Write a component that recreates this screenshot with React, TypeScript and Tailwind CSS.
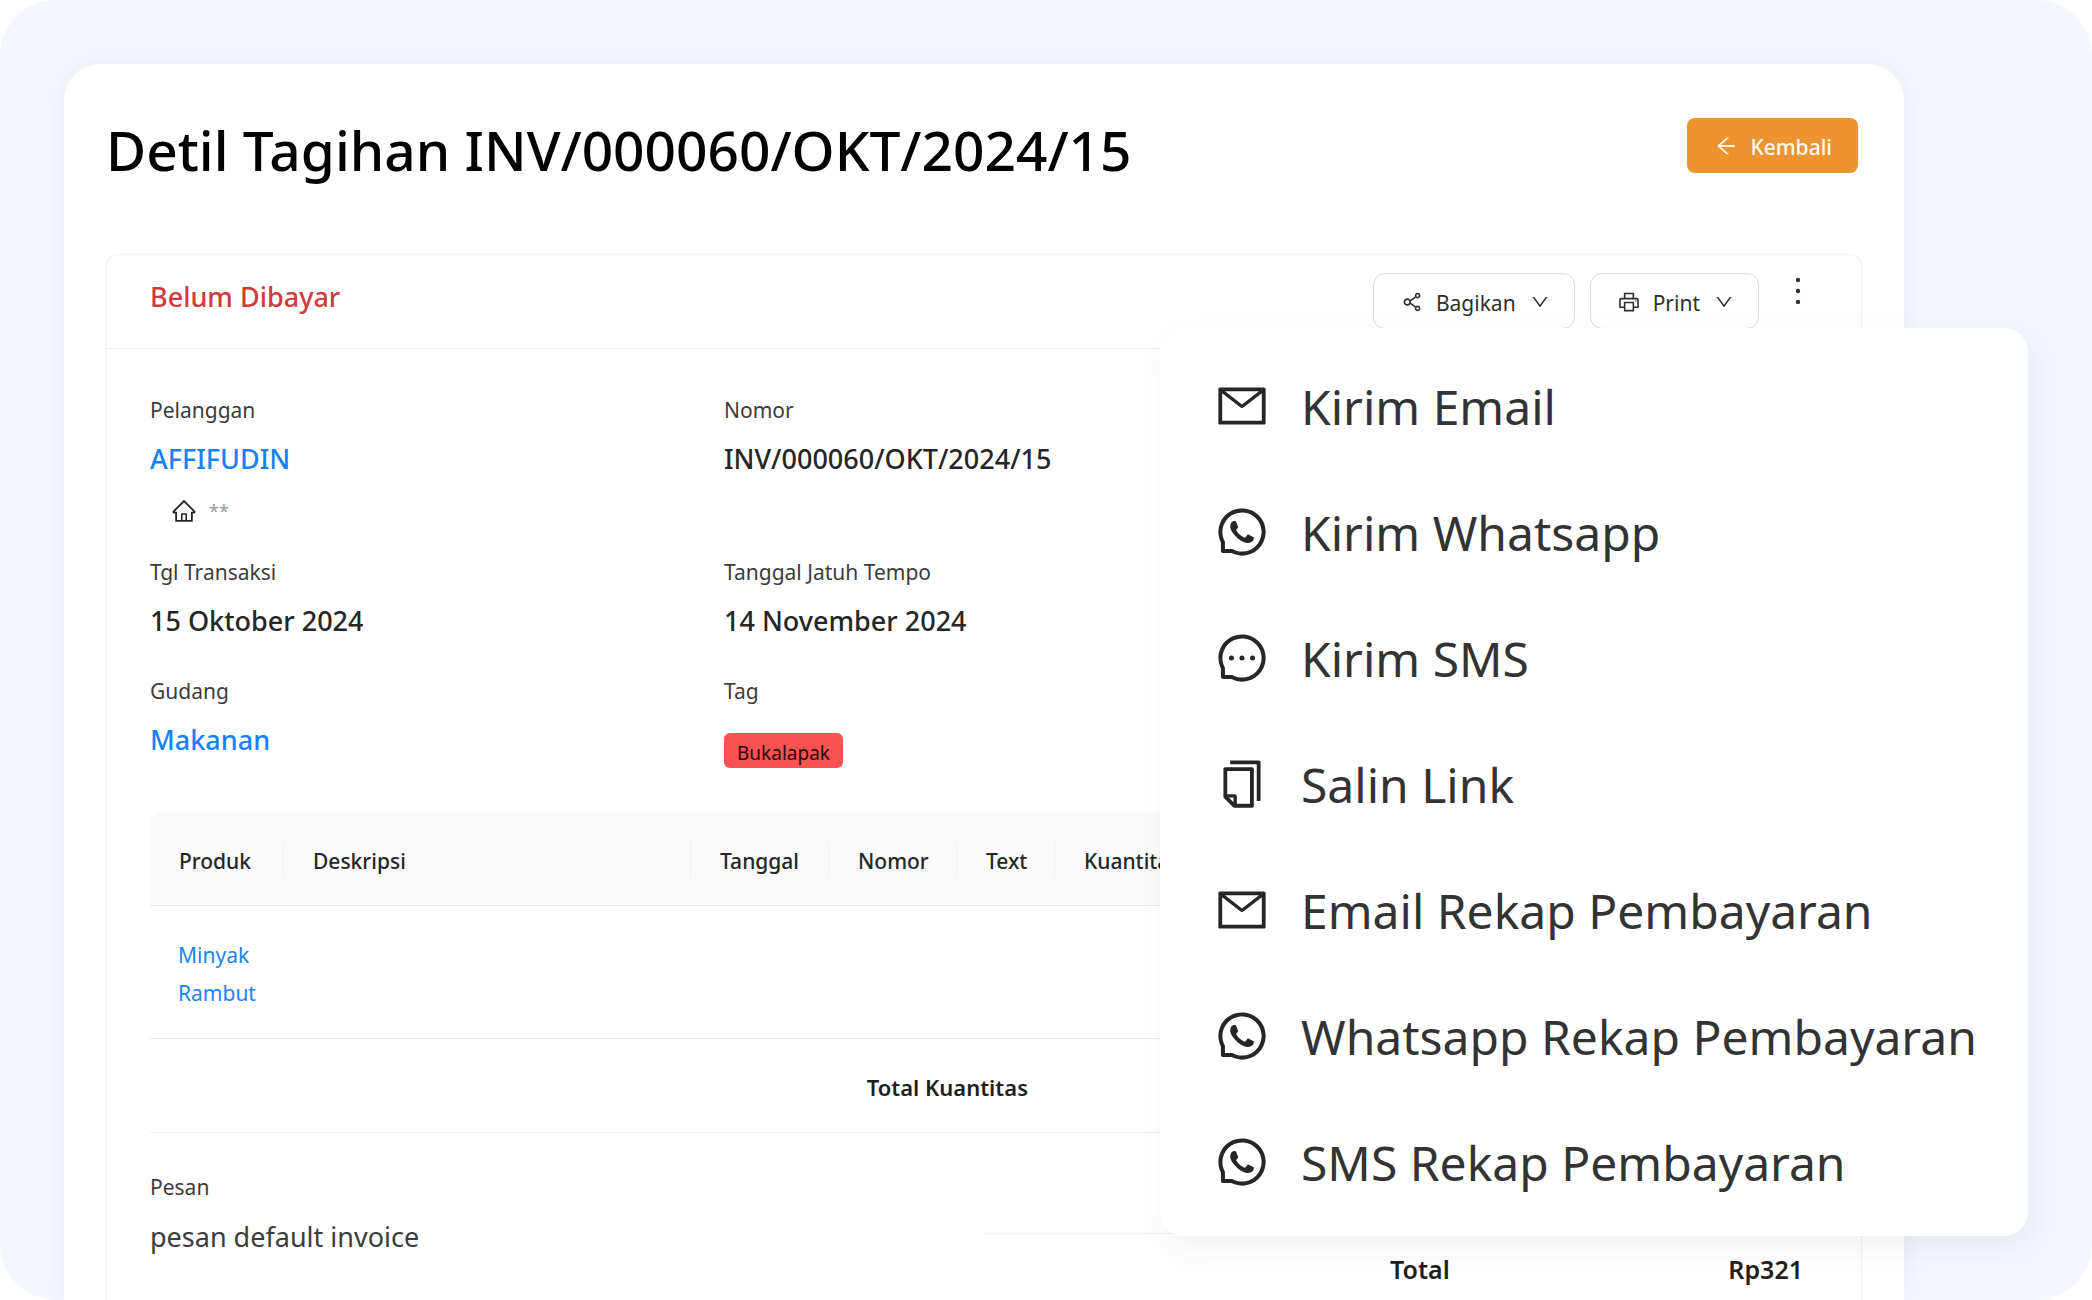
import React from 'react'
import {
  AiOutlineArrowLeft,
  AiOutlineCopy,
  AiOutlineDown,
  AiOutlineHome,
  AiOutlineMail,
  AiOutlineMessage,
  AiOutlineMore,
  AiOutlinePrinter,
  AiOutlineShareAlt,
  AiOutlineWhatsApp,
} from 'react-icons/ai'

const shareMenu = [
  { label: 'Kirim Email', icon: AiOutlineMail },
  { label: 'Kirim Whatsapp', icon: AiOutlineWhatsApp },
  { label: 'Kirim SMS', icon: AiOutlineMessage },
  { label: 'Salin Link', icon: AiOutlineCopy },
  { label: 'Email Rekap Pembayaran', icon: AiOutlineMail },
  { label: 'Whatsapp Rekap Pembayaran', icon: AiOutlineWhatsApp },
  { label: 'SMS Rekap Pembayaran', icon: AiOutlineWhatsApp },
]

const columns = [
  { title: 'Produk', width: 'w-[134px]' },
  { title: 'Deskripsi', width: 'w-[407px]' },
  { title: 'Tanggal', width: 'w-[138px]' },
  { title: 'Nomor', width: 'w-[128px]' },
  { title: 'Text', width: 'w-[98px]' },
  { title: 'Kuantitas', width: '' },
]

function Field({ label, children }: { label: string; children: React.ReactNode }) {
  return (
    <div>
      <dt className="text-[21px] leading-7 text-[#3c3c3c]">{label}</dt>
      <dd className="mt-[17px] text-[27px] leading-9 font-medium text-[#262626]">{children}</dd>
    </div>
  )
}

function ShareMenu() {
  return (
    <div
      role="menu"
      className="absolute top-[328px] right-16 w-[868px] rounded-3xl bg-white pt-[15px] pb-[11px] shadow-[8px_12px_32px_rgba(0,0,0,0.06)]"
    >
      {shareMenu.map(({ label, icon: Icon }) => (
        <button
          key={label}
          type="button"
          role="menuitem"
          className="flex h-[126px] w-full items-center gap-8 pr-8 pl-[55px] text-left text-[48px] whitespace-nowrap text-[#333333]"
        >
          <Icon size={54} className="shrink-0 text-[#262626]" />
          <span className="pt-0.5">{label}</span>
        </button>
      ))}
    </div>
  )
}

function ItemTable() {
  return (
    <table className="mt-11 w-full table-fixed border-separate border-spacing-0 text-[21px]">
      <thead>
        <tr>
          {columns.map((col, i) => (
            <th
              key={col.title}
              className={`${col.width} h-[94px] border-b border-[#ececec] bg-[#fafafa] p-0 text-left font-medium text-[#262626] first:rounded-tl-xl last:rounded-tr-xl`}
            >
              <div
                className={`flex h-9 items-center pt-1.5 pl-[29px] ${i < columns.length - 1 ? 'border-r border-[#f0f0f0]' : ''}`}
              >
                {col.title}
              </div>
            </th>
          ))}
        </tr>
      </thead>
      <tbody>
        <tr>
          <td className="border-b border-[#ececec] px-7 pt-[30px] pb-[26px] leading-[38px]">
            <a href="#" className="text-[#1b84f5]">Minyak Rambut</a>
          </td>
          <td colSpan={5} className="border-b border-[#ececec]" />
        </tr>
        <tr>
          <td colSpan={5} className="h-[94px] border-b border-[#f0f0f0] px-[27px] pt-1 text-right text-[22px] font-semibold text-[#1f1f1f]">
            Total Kuantitas
          </td>
          <td className="border-b border-[#f0f0f0]" />
        </tr>
      </tbody>
    </table>
  )
}

export default function App() {
  return (
    <div className="relative flex min-h-screen flex-col overflow-hidden rounded-[56px] bg-[#f4f7fe] pt-16 pr-[188px] pl-16 font-['Noto_Sans',sans-serif]">
      <main className="flex flex-1 flex-col rounded-t-[36px] bg-white px-[42px] pt-[54px] shadow-[0_0_28px_rgba(0,0,0,0.05)]">
        <div className="flex items-start justify-between pr-1">
          <h1 className="text-[55px] leading-[64px] font-medium text-black">
            Detil Tagihan INV/000060/OKT/2024/15
          </h1>
          <button
            type="button"
            className="flex h-[55px] items-center rounded-lg bg-[#ec9332] pr-[26px] pl-[27px] text-[21px] font-medium text-[#fff8ee]"
          >
            <AiOutlineArrowLeft size={24} className="mr-3" />
            <span className="pt-1">Kembali</span>
          </button>
        </div>

        <section className="mt-[72px] flex-1 rounded-t-xl border border-b-0 border-[#f0f0f0]">
          <header className="flex h-[94px] items-start justify-between border-b border-[#f0f0f0] px-[43px]">
            <h2 className="mt-6 text-[27px] leading-9 font-medium text-[#cf3a3a]">Belum Dibayar</h2>
            <div className="mt-[18px] flex items-start text-[21px] text-[#2f2f2f]">
              <button
                type="button"
                className="mr-[15px] flex h-14 items-center rounded-xl border border-[#d9d9d9] pt-0.5 pr-6 pl-[26px]"
              >
                <AiOutlineShareAlt size={24} className="mr-3" />
                <span className="pt-1">Bagikan</span>
                <AiOutlineDown size={20} className="ml-[14px]" />
              </button>
              <button
                type="button"
                className="mr-[19px] flex h-14 items-center rounded-xl border border-[#d9d9d9] pt-0.5 pr-6 pl-[26px]"
              >
                <AiOutlinePrinter size={24} className="mr-3" />
                <span className="pt-1">Print</span>
                <AiOutlineDown size={20} className="ml-[14px]" />
              </button>
              <button type="button" aria-label="Lainnya" className="flex h-9 items-center">
                <AiOutlineMore size={40} />
              </button>
            </div>
          </header>

          <div className="px-[43px] pt-[47px]">
            <dl className="grid grid-cols-3 gap-x-[54px] gap-y-[38px]">
              <Field label="Pelanggan">
                <a href="#" className="text-[#1682f3]">AFFIFUDIN</a>
                <div className="mt-[25px] flex h-[18px] items-center gap-3 pl-[21px] text-[18px] font-normal text-[#9a9a9a]">
                  <AiOutlineHome size={26} className="text-[#262626]" />
                  **
                </div>
              </Field>
              <Field label="Nomor">INV/000060/OKT/2024/15</Field>
              <div />
              <Field label="Tgl Transaksi">15 Oktober 2024</Field>
              <Field label="Tanggal Jatuh Tempo">14 November 2024</Field>
              <div />
              <Field label="Gudang">
                <a href="#" className="text-[#1682f3]">Makanan</a>
              </Field>
              <Field label="Tag">
                <span className="mt-7 flex h-[35px] w-fit items-center rounded-md bg-[#fc5252] px-[13px] pt-1 text-[19px] font-normal text-[#2a0a0a]">
                  Bukalapak
                </span>
              </Field>
            </dl>

            <ItemTable />

            <div className="mt-10 grid grid-cols-2">
              <div>
                <p className="text-[21px] leading-7 text-[#3c3c3c]">Pesan</p>
                <p className="mt-[18px] text-[27px] leading-9 text-[#3c3c3c]">pesan default invoice</p>
              </div>
              <div className="mt-[60px] flex justify-between border-t border-[#f0f0f0] pt-[17px] pr-[15px] pl-[406px] text-[25px] leading-9 font-semibold text-[#1f1f1f]">
                <span>Total</span>
                <span>Rp321</span>
              </div>
            </div>
          </div>
        </section>
      </main>

      <ShareMenu />
    </div>
  )
}
